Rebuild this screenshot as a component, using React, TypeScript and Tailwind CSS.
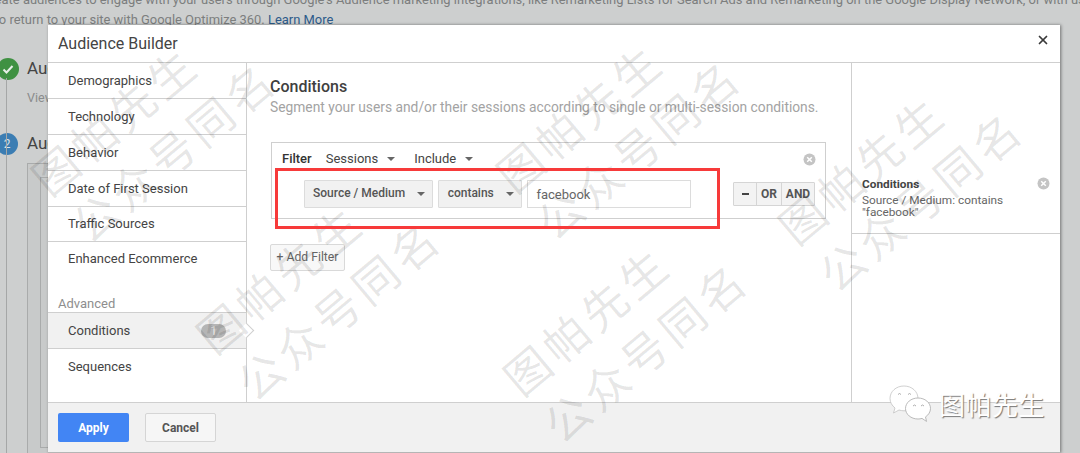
import { X } from 'lucide-react'

const menu = [
  { label: 'Demographics', cls: 'h-[36px] border-b' },
  { label: 'Technology', cls: 'h-[36px] border-b' },
  { label: 'Behavior', cls: 'h-[36px] border-b' },
  { label: 'Date of First Session', cls: 'h-[36px] border-b' },
  { label: 'Traffic Sources', cls: 'h-[35px] border-b' },
  { label: 'Enhanced Ecommerce', cls: 'h-[33px]' },
]

const marks = [
  { left: 'left-[28px]', top: 'top-[65px]' },
  { left: 'left-[193px]', top: 'top-[223px]' },
  { left: 'left-[500px]', top: 'top-[265px]' },
  { left: 'left-[493px]', top: 'top-[62px]' },
  { left: 'left-[775px]', top: 'top-[114px]' },
]

function Caret() {
  return <span className="ml-[9px] inline-block h-0 w-0 border-x-[4px] border-t-[4px] border-x-transparent border-t-[#666]" />
}

function ClearIcon() {
  return (
    <svg width="13" height="13" viewBox="0 0 13 13">
      <circle cx="6.5" cy="6.5" r="6" fill="#c4c4c4" />
      <path d="M4.200 4.200l4.600 4.600M8.800 4.200l-4.600 4.600" stroke="#fff" strokeWidth="1.500" />
    </svg>
  )
}

function Watermark({ left, top }: { left: string; top: string }) {
  return (
    <div className={`pointer-events-none absolute ${left} ${top} z-20 w-[250px] origin-center -rotate-[40deg] whitespace-nowrap text-left text-[45px] leading-[62px] tracking-[5px] text-black/10 font-['Noto_Sans_CJK_SC',sans-serif]`}>
      <div>图帕先生</div>
      <div>公众号同名</div>
    </div>
  )
}

export default function App() {
  return (
    <div className="relative h-[453px] w-[1080px] overflow-hidden bg-[#cdcfcf] font-['Roboto',sans-serif] text-[#444]">
      {/* page behind the dialog */}
      <div className="-mt-[10px] -ml-[18px] w-[1200px] text-[12.95px] leading-[20px] text-[#7c7e7e]">
        <p className="whitespace-nowrap">Create audiences to engage with your users through Google's Audience marketing integrations, like Remarketing Lists for Search Ads and Remarketing on the Google Display Network, or with us</p>
        <p className="whitespace-nowrap">who return to your site with Google Optimize 360. <span className="text-[#2c5a8a]">Learn More</span></p>
      </div>
      <div className="mt-[26px] -ml-[3px] flex items-center gap-[8px]">
        <div className="flex h-[22px] w-[22px] items-center justify-center rounded-full bg-[#3f9142]">
          <svg width="14" height="14" viewBox="0 0 14 14"><path d="M2.500 7.500l3 3 6-6.500" fill="none" stroke="#e8efe8" strokeWidth="2" /></svg>
        </div>
        <span className="text-[17px] text-[#444]">Audience</span>
      </div>
      <div className="mt-[7px] pl-[27px] text-[12.5px] text-[#8a8c8c]">View</div>
      <div className="mt-[24px] -ml-[4px] flex items-center gap-[9px]">
        <div className="flex h-[22px] w-[22px] items-center justify-center rounded-full bg-[#3b7db3] text-[12px] text-[#d5e0e8]">2</div>
        <span className="text-[17px] text-[#444]">Audience</span>
      </div>
      <div className="mt-[6px] ml-[27px] h-[300px] w-[60px] border border-[#a9abab] bg-[#c8caca] pt-[13px] pl-[12px]">
        <div className="h-[271px] border border-[#a9abab]" />
      </div>
      <div className="absolute top-[78px] left-[6px] h-[375px] w-px bg-[#a5a7a7]" />

      {/* dialog */}
      <div className="absolute top-[25px] left-[48px] z-10 flex h-[428px] w-[1012px] flex-col border-b border-[#b5b5b5] bg-white shadow-[1px_0_3px_rgba(0,0,0,0.45)]">
        <div className="flex h-[38px] shrink-0 items-center justify-between border-b border-[#cfcfcf] pr-[10px] pl-[10px]">
          <span className="mt-[1px] text-[16px] text-[#444]">Audience Builder</span>
          <X size={14} strokeWidth={3} className="-mt-[7px] text-[#3a3a3a]" />
        </div>
        <div className="flex min-h-0 flex-1">
          <div className="w-[199px] shrink-0 border-r border-[#cfcfcf]">
            {menu.map((m) => (
              <div key={m.label} className={`flex items-center border-[#cfcfcf] pl-[20px] text-[13px] text-[#444] ${m.cls}`}>{m.label}</div>
            ))}
            <div className="mt-[20px] h-[18px] border-b border-[#cfcfcf] pl-[10px] text-[13px] leading-[18px] text-[#8e8e8e]">Advanced</div>
            <div className="relative flex h-[36px] items-center justify-between border-b border-[#cfcfcf] bg-[#f1f1f1] pr-[20px] pl-[20px] text-[13px]">
              Conditions
              <span className="flex h-[14px] w-[25px] items-center justify-center rounded-full bg-[#b5b5b5] text-[12px] text-[#e8e8e8]">1</span>
              <span className="absolute top-[12px] -right-[6px] h-[11px] w-[11px] rotate-45 border-t border-r border-[#cfcfcf] bg-white" />
            </div>
            <div className="flex h-[35px] items-center pl-[20px] text-[13px]">Sequences</div>
          </div>

          <div className="min-w-0 flex-1 pt-[14px] pl-[23px]">
            <div className="text-[16px] leading-[20px] font-medium text-[#3f3f3f]">Conditions</div>
            <div className="text-[13.8px] leading-[20px] text-[#a3a3a3]">Segment your users and/or their sessions according to single or multi-session conditions.</div>
            <div className="mt-[25px] ml-[1px] h-[77px] w-[555px] border border-[#cfcfcf] pt-[8px] pr-[10px] pl-[10px]">
              <div className="flex h-[16px] items-center text-[13px]">
                <span className="mr-[14px] font-medium text-[#333]">Filter</span>
                <span>Sessions</span>
                <Caret />
                <span className="ml-[19px]">Include</span>
                <Caret />
                <span className="ml-auto -mr-[1px] flex"><ClearIcon /></span>
              </div>
              <div className="mt-[13px] flex items-center pl-[22px]">
                <div className="flex h-[28px] w-[129px] items-center rounded-[1px] border border-[#dcdcdc] bg-[#f1f1f1] pb-[3px] pl-[8px] text-[12px] font-medium text-[#555]">
                  Source / Medium<span className="mt-[3px] mr-[7px] ml-auto flex"><Caret /></span>
                </div>
                <div className="ml-[5px] flex h-[28px] w-[85px] items-center rounded-[1px] border border-[#dcdcdc] bg-[#f1f1f1] pb-[3px] pl-[9px] text-[12px] font-medium text-[#555]">
                  contains<span className="mt-[3px] mr-[7px] ml-auto flex"><Caret /></span>
                </div>
                <div className="ml-[5px] flex h-[28px] w-[164px] items-center border border-[#dcdcdc] bg-white pt-[1px] pl-[8px] text-[13px] text-[#666]">facebook</div>
                <div className="ml-[42px] flex h-[24px] items-center rounded-[1px] border border-[#d5d5d5] bg-[#f3f3f3] text-[12px] font-bold text-[#555]">
                  <span className="flex h-full w-[23px] items-center justify-center border-r border-[#d5d5d5]"><span className="h-[2px] w-[7px] bg-[#444]" /></span>
                  <span className="flex h-full w-[25px] items-center justify-center border-r border-[#d5d5d5]">OR</span>
                  <span className="flex h-full w-[32px] items-center justify-center">AND</span>
                </div>
              </div>
            </div>
            <button className="mt-[25px] block h-[27px] w-[75px] rounded-[2px] border border-[#d9d9d9] bg-[#f8f8f8] text-[12.2px] text-[#666]">+ Add Filter</button>
          </div>

          <div className="w-[209px] shrink-0 border-l border-[#cfcfcf]">
            <div className="flex h-[171px] items-start justify-between border-b border-[#cfcfcf] pt-[115px] pr-[10px] pl-[10px]">
              <div className="text-[11.8px] leading-[12.5px] text-[#666]">
                <div className="mb-[3px] font-bold text-[#444]">Conditions</div>
                <div>Source / Medium: contains</div>
                <div>"facebook"</div>
              </div>
              <span className="-mt-[1px] flex"><ClearIcon /></span>
            </div>
          </div>
        </div>
        <div className="flex h-[50px] shrink-0 items-center border-t border-[#cfcfcf] bg-[#f1f1f1] pl-[10px]">
          <button className="h-[29px] w-[71px] rounded-[2px] bg-[#4285f4] text-[12px] font-bold text-white">Apply</button>
          <button className="ml-[16px] h-[29px] w-[71px] rounded-[2px] border border-[#d5d5d5] bg-[#f6f6f6] text-[12px] font-bold text-[#555]">Cancel</button>
        </div>
      </div>

      {/* annotation */}
      <div className="absolute top-[168px] left-[275px] z-30 h-[61px] w-[445px] border-[3px] border-[#f73a3a]" />

      {marks.map((m, i) => <Watermark key={i} left={m.left} top={m.top} />)}

      {/* account stamp */}
      <div className="absolute top-[385px] left-[889px] z-30 flex items-center gap-[6px]">
        <svg width="44" height="38" viewBox="0 0 44 38">
          <path d="M15 1C7 1 1 6.500 1 13.500c0 4 2 7 5 9.500l-1.500 5 5.500-3c1.500.5 3.500.8 5 .8 8 0 14-5.500 14-12.300S23 1 15 1z" fill="#fff" stroke="#bbb" strokeWidth="0.7" />
          <path d="M29 13c-7 0-12.500 4.700-12.500 10.500S22 34 29 34c1.300 0 2.700-.2 4-.6l4.500 3-1-4.500c3-2 5-5 5-8.400C41.500 17.700 36 13 29 13z" fill="#fff" stroke="#aaa" strokeWidth="0.8" />
          <path d="M9 9.500l1.500-1 1.500 1M19 9.500l1.500-1 1.500 1M24 21l1.500-1 1.500 1M32 21l1.500-1 1.500 1" fill="none" stroke="#999" strokeWidth="0.8" />
        </svg>
        <span className="text-[26px] leading-none tracking-[0.5px] text-white [text-shadow:1px_1px_1px_#777] font-['Noto_Sans_CJK_SC',sans-serif]">图帕先生</span>
      </div>
    </div>
  )
}
